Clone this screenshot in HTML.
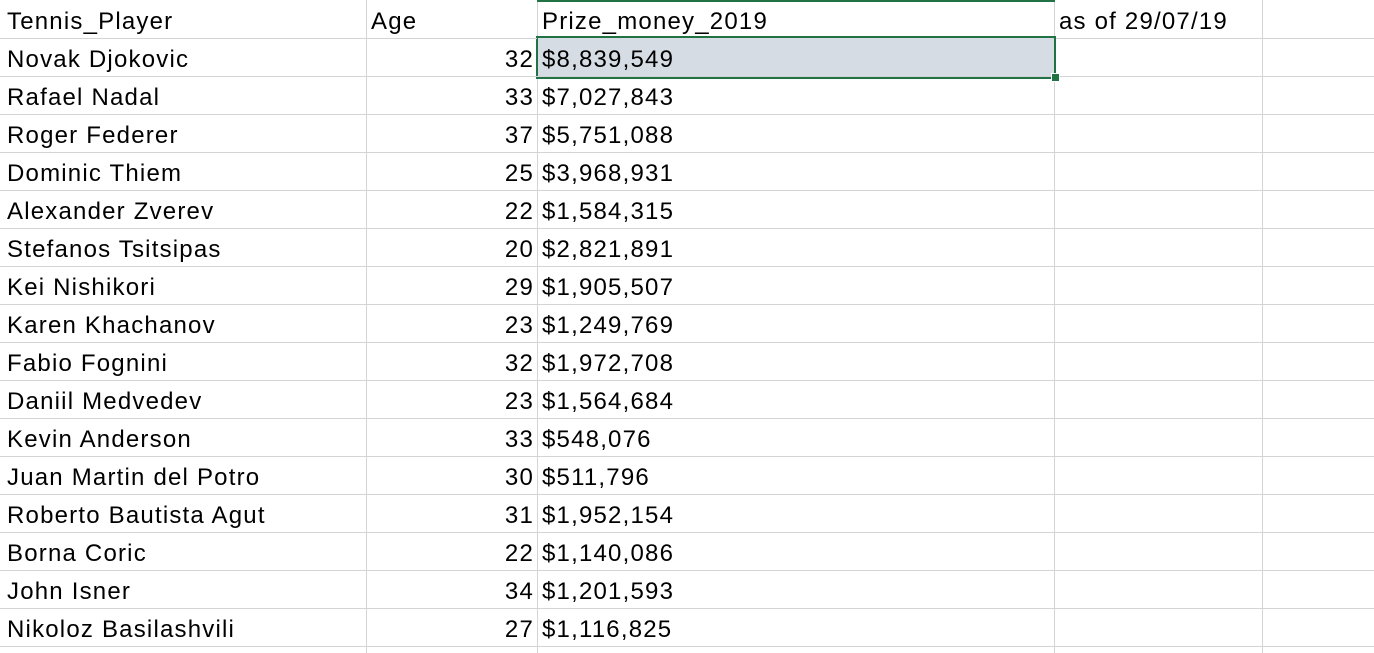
<!DOCTYPE html>
<html><head><style>
html,body{margin:0;padding:0;background:#fff;width:1374px;height:653px;overflow:hidden}
body{font-family:"Liberation Sans",sans-serif;font-size:24px;letter-spacing:1.2px;color:#000}
.vl{position:absolute;top:0;width:1px;height:653px;background:#d4d4d4}
.hl{position:absolute;left:0;width:1374px;height:1px;background:#d4d4d4}
.t{position:absolute;line-height:43px;height:38px;white-space:nowrap}
.r{text-align:right}
</style></head><body>
<div class="vl" style="left:366px"></div>
<div class="vl" style="left:537px"></div>
<div class="vl" style="left:1054px"></div>
<div class="vl" style="left:1262px"></div>
<div style="position:absolute;left:537px;top:0;width:518px;height:2px;background:#217346"></div>
<div style="position:absolute;left:536px;top:36px;width:516px;height:39px;background:#d6dce4;border:2px solid #217346"></div>
<div id="rows"></div>
<div style="position:absolute;left:1051px;top:73px;width:7px;height:7px;background:#217346;border:1px solid #fff"></div>
<script>
var d=[["Tennis_Player","Age","Prize_money_2019","as of 29/07/19"],
["Novak Djokovic","32","$8,839,549"],["Rafael Nadal","33","$7,027,843"],["Roger Federer","37","$5,751,088"],
["Dominic Thiem","25","$3,968,931"],["Alexander Zverev","22","$1,584,315"],["Stefanos Tsitsipas","20","$2,821,891"],
["Kei Nishikori","29","$1,905,507"],["Karen Khachanov","23","$1,249,769"],["Fabio Fognini","32","$1,972,708"],
["Daniil Medvedev","23","$1,564,684"],["Kevin Anderson","33","$548,076"],["Juan Martin del Potro","30","$511,796"],
["Roberto Bautista Agut","31","$1,952,154"],["Borna Coric","22","$1,140,086"],["John Isner","34","$1,201,593"],
["Nikoloz Basilashvili","27","$1,116,825"]];
var h="";
for(var i=0;i<d.length;i++){var y=i*38;
if(i>0)h+='<div class="hl" style="top:'+(y+38)+'px"></div>';
h+='<div class="t" style="left:7px;top:'+y+'px">'+d[i][0]+'</div>';
if(i==0)h+='<div class="t" style="left:371px;top:0">Age</div>';
else h+='<div class="t r" style="left:366px;width:168px;top:'+y+'px">'+d[i][1]+'</div>';
h+='<div class="t" style="left:542px;top:'+y+'px;z-index:2">'+d[i][2]+'</div>';
if(d[i][3])h+='<div class="t" style="left:1059px;top:0">'+d[i][3]+'</div>';}
h+='<div class="hl" style="top:38px;width:537px"></div><div class="hl" style="top:38px;left:1056px;width:318px"></div>';
document.getElementById("rows").innerHTML=h;
</script>
</body></html>
